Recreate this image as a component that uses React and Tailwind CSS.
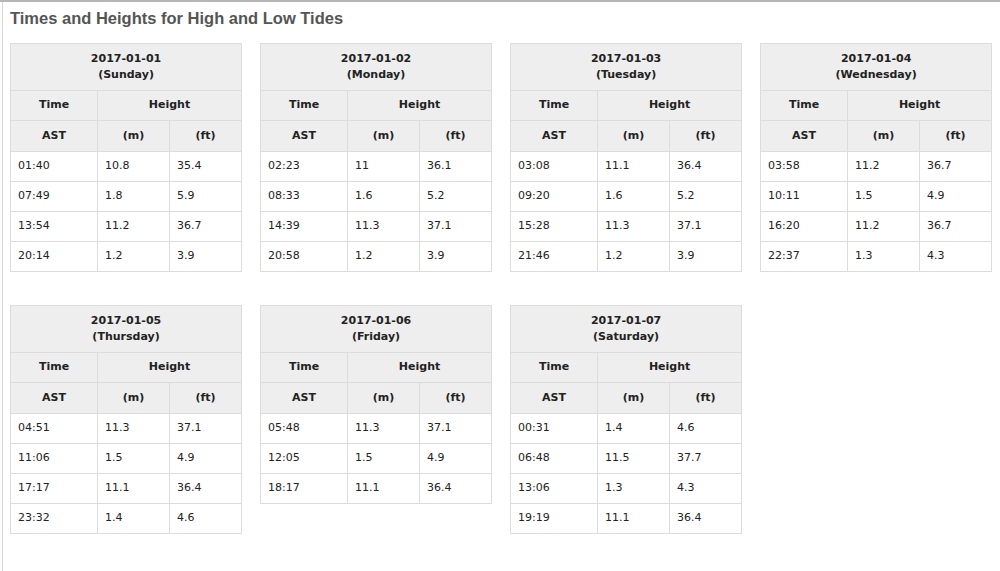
const days = [
    { date: '2017-01-01', day: 'Sunday', rows: [['01:40', '10.8', '35.4'], ['07:49', '1.8', '5.9'], ['13:54', '11.2', '36.7'], ['20:14', '1.2', '3.9']] },
    { date: '2017-01-02', day: 'Monday', rows: [['02:23', '11', '36.1'], ['08:33', '1.6', '5.2'], ['14:39', '11.3', '37.1'], ['20:58', '1.2', '3.9']] },
    { date: '2017-01-03', day: 'Tuesday', rows: [['03:08', '11.1', '36.4'], ['09:20', '1.6', '5.2'], ['15:28', '11.3', '37.1'], ['21:46', '1.2', '3.9']] },
    { date: '2017-01-04', day: 'Wednesday', rows: [['03:58', '11.2', '36.7'], ['10:11', '1.5', '4.9'], ['16:20', '11.2', '36.7'], ['22:37', '1.3', '4.3']] },
    { date: '2017-01-05', day: 'Thursday', rows: [['04:51', '11.3', '37.1'], ['11:06', '1.5', '4.9'], ['17:17', '11.1', '36.4'], ['23:32', '1.4', '4.6']] },
    { date: '2017-01-06', day: 'Friday', rows: [['05:48', '11.3', '37.1'], ['12:05', '1.5', '4.9'], ['18:17', '11.1', '36.4']] },
    { date: '2017-01-07', day: 'Saturday', rows: [['00:31', '1.4', '4.6'], ['06:48', '11.5', '37.7'], ['13:06', '1.3', '4.3'], ['19:19', '11.1', '36.4']] },
]

const th = 'border border-[#dcdcdc] bg-[#eeeeee] font-bold text-center p-0'
const td = 'border border-[#dcdcdc] h-[30px] pl-[7px] py-0 text-left'

function TideTable({ date, day, rows }) {
    return (
        <table className="w-[231px] border-collapse table-fixed text-[11px] text-[#222]">
            <colgroup>
                <col className="w-[87px]" />
                <col className="w-[72px]" />
                <col className="w-[72px]" />
            </colgroup>
            <thead>
                <tr>
                    <th colSpan={3} className={th + ' h-[47px] leading-[16px]'}>
                        {date}<br />({day})
                    </th>
                </tr>
                <tr>
                    <th className={th + ' h-[30px]'}>Time</th>
                    <th colSpan={2} className={th + ' h-[30px]'}>Height</th>
                </tr>
                <tr>
                    <th className={th + ' h-[31px]'}>AST</th>
                    <th className={th + ' h-[31px]'}>(m)</th>
                    <th className={th + ' h-[31px]'}>(ft)</th>
                </tr>
            </thead>
            <tbody>
                {rows.map((r) => (
                    <tr key={r[0]}>
                        <td className={td}>{r[0]}</td>
                        <td className={td}>{r[1]}</td>
                        <td className={td}>{r[2]}</td>
                    </tr>
                ))}
            </tbody>
        </table>
    )
}

export default function App() {
    return (
        <div className="h-[571px] bg-white border-t-2 border-[#b5b5b5] overflow-hidden" style={{ fontFamily: '"DejaVu Sans", Verdana, sans-serif' }}>
            <div className="ml-[2px] h-full border-l border-[#d8d8d8] pl-[7px]">
                <h1 className="pt-[6px] text-[16.5px] font-bold text-[#555] leading-[20px]" style={{ fontFamily: '"Liberation Sans", Arial, sans-serif' }}>
                    Times and Heights for High and Low Tides
                </h1>
                <div className="mt-[15px] flex flex-wrap gap-x-[18px] gap-y-[33px] items-start">
                    {days.map((d) => (
                        <TideTable key={d.date} {...d} />
                    ))}
                </div>
            </div>
        </div>
    )
}
